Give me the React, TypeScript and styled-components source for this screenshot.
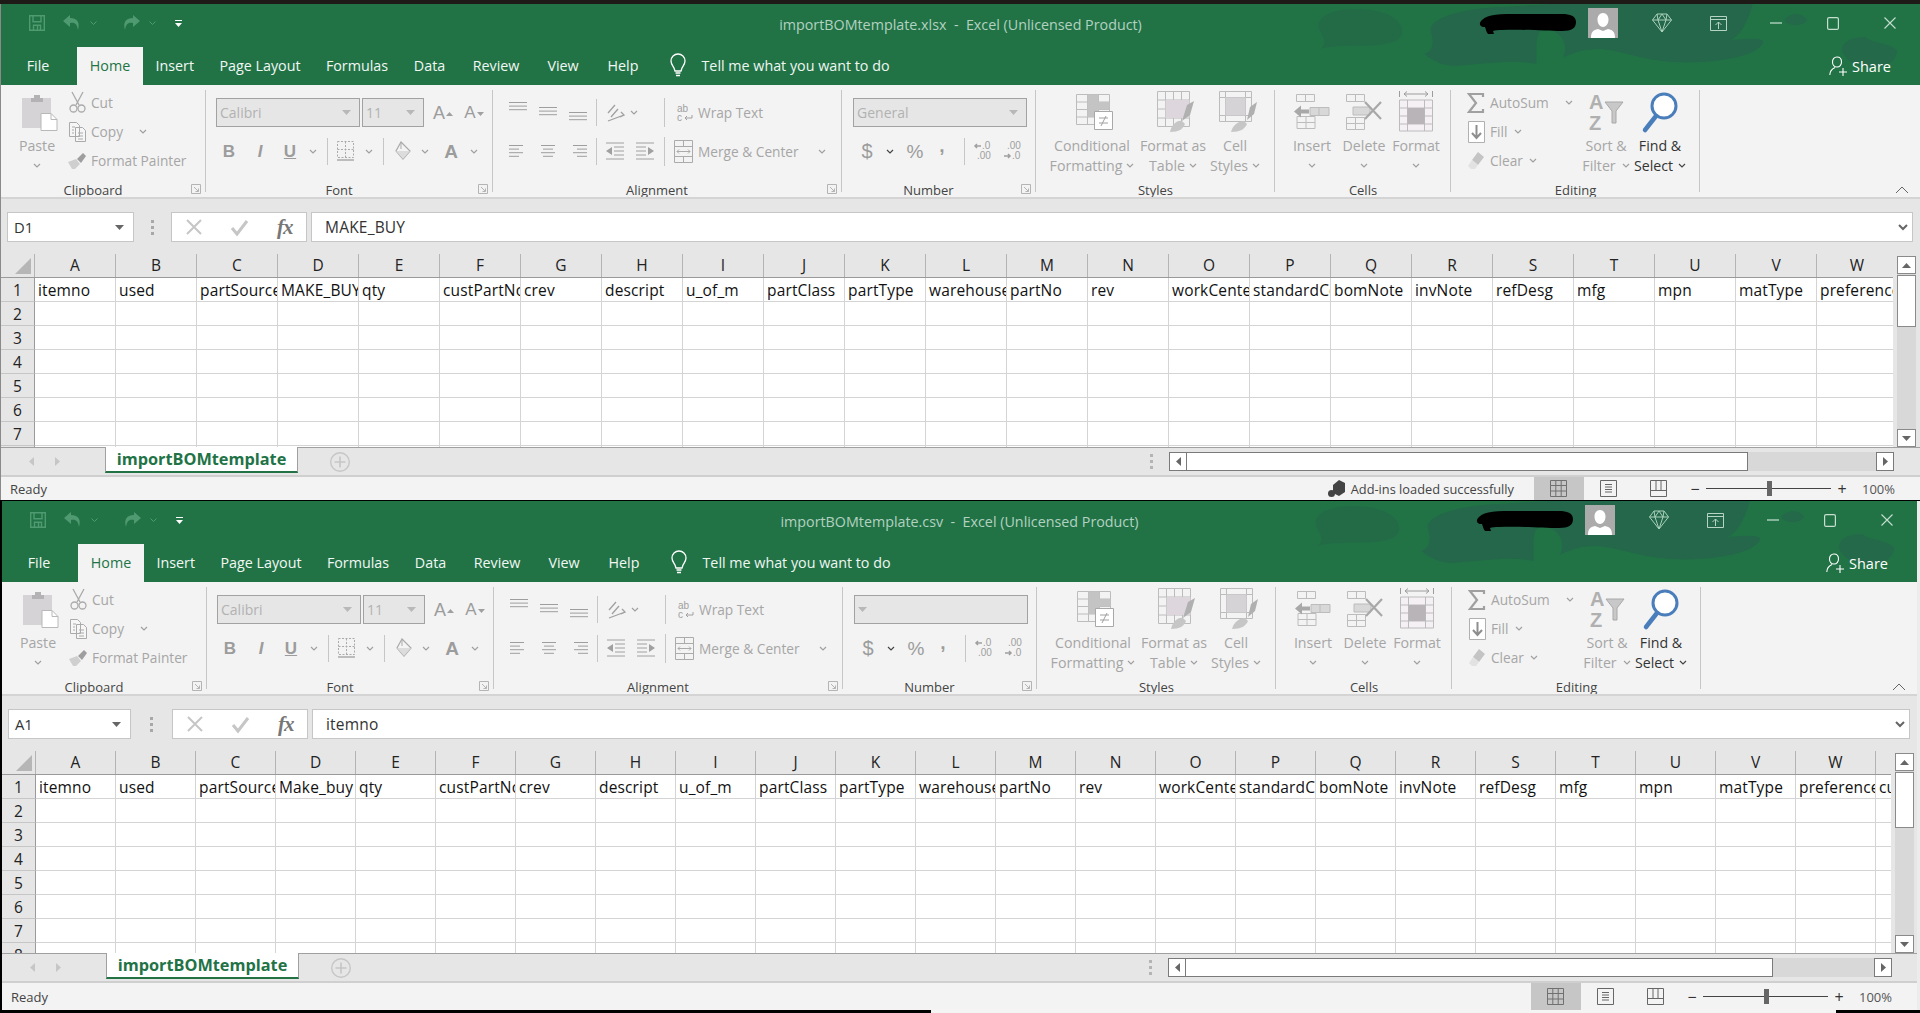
import React from 'react';
import styled, { createGlobalStyle } from 'styled-components';

const UI = '"Open Sans", "Noto Sans", "Liberation Sans", sans-serif';
const GREEN = '#217346';
const DIS = '#a6a6a6';
const STK = '#aaaaaa';
const FIL = '#d6d3d6';

const Global = createGlobalStyle`
  html, body { margin: 0; padding: 0; background: #000; }
  body { width: 1920px; height: 1013px; overflow: hidden; font-family: ${UI}; }
`;

const Page = styled.div`display: flex; flex-direction: column; width: 1920px; height: 1013px; background: #000;`;
const TopStrip = styled.div`height: 4px; background: #1d1a18;`;
const BottomStrip = styled.div`display: flex; height: 3px; background: #000;`;
const BottomPaper = styled.div`width: 905px; margin-left: 931px; background: #f4f4f4;`;

const Win = styled.div<{ $ml: number; $pl: number; $mt: number; $width: number; $edge: number }>`
  display: flex; flex-direction: column; flex: none; box-sizing: border-box;
  width: ${p => p.$width}px; margin-left: ${p => p.$ml}px; margin-top: ${p => p.$mt}px;
  padding-left: ${p => p.$pl}px; background: ${GREEN}; position: relative;
  border-right: ${p => p.$edge}px solid #ececec;
  box-shadow: inset ${p => p.$pl}px 0 0 #8a8a8a;
`;

const Banner = styled.svg`position: absolute; right: 0; top: 0; pointer-events: none;`;

/* ---------- title bar ---------- */
const TitleBar = styled.div`position: relative; display: flex; align-items: center; height: 38px; margin-bottom: 5px; padding: 0 24px 0 28px; color: #b6d4c3;`;
const TitleText = styled.div`position: absolute; left: 0; right: 0; top: 10px; text-align: center; font-size: 14.3px; line-height: 22px; color: #b3d1c0; white-space: pre;`;
const Qat = styled.div`display: flex; align-items: center; position: relative;`;
const WinTools = styled.div`display: flex; align-items: center; margin-left: auto; position: relative;`;
const Ico = styled.svg<{ $ml?: number }>`display: block; flex: none; overflow: visible; margin-left: ${p => p.$ml ?? 0}px;`;
const Avatar = styled.div`width: 30px; height: 30px; margin-left: 10px; background: #ababab; flex: none; overflow: hidden;`;

/* ---------- tabs ---------- */
const TabRow = styled.div`position: relative; display: flex; height: 38px; padding-left: 12px; color: #fff; font-size: 14.3px;`;
const Tab = styled.div<{ $w: number; $active?: boolean; $ml?: number }>`
  display: flex; align-items: center; justify-content: center; flex: none; box-sizing: border-box; padding-bottom: 2px;
  width: ${p => p.$w}px; margin-left: ${p => p.$ml ?? 0}px;
  color: ${p => (p.$active ? GREEN : '#f2f7f4')}; background: ${p => (p.$active ? '#f3f3f3' : 'transparent')};
`;
const TellMe = styled.div`display: flex; align-items: center; margin-left: 16px; gap: 16px; padding-bottom: 2px; color: #f0f6f2; font-size: 14.3px; white-space: nowrap;`;
const Share = styled.div`display: flex; align-items: center; gap: 5px; margin-left: auto; padding-right: 29px; font-size: 14.5px; color: #fff; position: relative;`;

/* ---------- ribbon ---------- */
const Ribbon = styled.div`display: flex; position: relative; box-sizing: border-box; height: 114px; padding-top: 4px; background: #f3f3f3; border-bottom: 2px solid #d4d4d4; font-size: 13.7px; color: ${DIS}; overflow: hidden;`;
const Group = styled.div<{ $w: number }>`
  position: relative; display: flex; flex-direction: column; flex: none; box-sizing: border-box; width: ${p => p.$w}px;
  &::after { content: ''; position: absolute; right: 0; top: 1px; bottom: 5px; width: 1px; background: #c6c6c6; }
`;
const GroupBody = styled.div<{ $pl: number }>`display: flex; flex: 1; min-height: 0; padding-left: ${p => p.$pl}px;`;
const GroupName = styled.div<{ $launcher?: boolean }>`height: 19px; margin-bottom: -3px; line-height: 19px; text-align: center; font-size: 13px; color: #444; padding-right: ${p => (p.$launcher ? 21 : 0)}px;`;
const Launcher = styled.svg`position: absolute; right: 5px; bottom: 3px;`;
const Stack = styled.div<{ $w?: number; $ml?: number }>`display: flex; flex-direction: column; flex: none; ${p => (p.$w ? `width:${p.$w}px;` : '')} margin-left: ${p => p.$ml ?? 0}px; margin-top: -1px;`;
const SmallRow = styled.div`display: flex; align-items: center; height: 29px; white-space: nowrap;`;
const IconSlot = styled.div<{ $w: number; $ml?: number }>`display: flex; align-items: center; justify-content: center; flex: none; width: ${p => p.$w}px; margin-left: ${p => p.$ml ?? 0}px;`;
const SmallText = styled.span<{ $w?: number; $ml?: number }>`flex: none; margin-left: ${p => p.$ml ?? 5}px; ${p => (p.$w ? `width:${p.$w}px;` : '')}`;
const Large = styled.div<{ $w: number; $on?: boolean; $ml?: number }>`display: flex; flex-direction: column; align-items: center; flex: none; width: ${p => p.$w}px; margin-left: ${p => p.$ml ?? 0}px; font-size: 14.2px; color: ${p => (p.$on ? '#333' : DIS)};`;
const LargeIcon = styled.div<{ $dx?: number }>`display: flex; align-items: center; justify-content: center; height: 46px; margin-left: ${p => p.$dx ?? 0}px;`;
const LargeLine = styled.div`display: flex; align-items: center; height: 20px; white-space: nowrap;`;
const ToolRows = styled.div<{ $pt: number }>`display: flex; flex-direction: column; padding-top: ${p => p.$pt}px;`;
const ToolRow = styled.div<{ $h: number; $mb?: number }>`display: flex; align-items: center; height: ${p => p.$h}px; margin-bottom: ${p => p.$mb ?? 0}px; white-space: nowrap;`;
const Combo = styled.div<{ $w: number; $ml?: number }>`display: flex; align-items: center; justify-content: space-between; box-sizing: border-box; flex: none; width: ${p => p.$w}px; height: 29px; margin-left: ${p => p.$ml ?? 0}px; padding: 0 8px 0 3px; background: #e6e6e6; border: 1px solid #a2a2a2; color: #b2b2b2; font-size: 14px;`;
const VSep = styled.div<{ $ml?: number; $mr?: number; $h?: number }>`flex: none; width: 1px; height: ${p => p.$h ?? 27}px; background: #c6c6c6; margin-left: ${p => p.$ml ?? 0}px; margin-right: ${p => p.$mr ?? 0}px;`;
const Glyph = styled.span<{ $b?: boolean; $i?: boolean; $u?: boolean; $size?: number; $color?: string }>`
  font-family: "Liberation Sans", sans-serif; font-size: ${p => p.$size ?? 16}px; line-height: 1; color: ${p => p.$color ?? '#9c9c9c'};
  font-weight: ${p => (p.$b ? 700 : 400)}; font-style: ${p => (p.$i ? 'italic' : 'normal')}; text-decoration: ${p => (p.$u ? 'underline' : 'none')};
`;
const RaisedMark = styled.svg`flex: none; align-self: flex-start; margin-top: 8px; margin-left: 1px;`;
const Shifted = styled.div<{ $y: number }>`transform: translateY(${p => p.$y}px);`;
const Collapse = styled.svg`position: absolute; right: 11px; bottom: 3px;`;

/* ---------- formula bar ---------- */
const FormulaRow = styled.div`display: flex; height: 55px; box-sizing: border-box; padding: 13px 7px 0 6px; background: #e6e6e6;`;
const NameBox = styled.div<{ $w: number }>`display: flex; align-items: center; justify-content: space-between; box-sizing: border-box; flex: none; width: ${p => p.$w}px; height: 30px; padding: 0 9px 0 6px; background: #fff; border: 1px solid #c6c6c6; color: #333; font-size: 14.8px;`;
const DotsSlot = styled.div<{ $w: number }>`display: flex; align-items: center; justify-content: center; flex: none; width: ${p => p.$w}px; height: 30px;`;
const FxBox = styled.div`display: flex; align-items: center; flex: none; box-sizing: border-box; width: 136px; height: 30px; background: #fff; border: 1px solid #c6c6c6; padding-left: 14px;`;
const FxText = styled.span`margin-left: 29px; font-family: "Liberation Serif", serif; font-style: italic; font-weight: 700; font-size: 21px; line-height: 1; letter-spacing: -1px; color: #777;`;
const FormulaBox = styled.div`display: flex; align-items: center; justify-content: space-between; flex: 1; box-sizing: border-box; height: 30px; margin-left: 4px; padding: 0 4px 0 13px; background: #fff; border: 1px solid #c6c6c6; color: #333; font-size: 15.5px; letter-spacing: .2px;`;

/* ---------- grid ---------- */
const SheetArea = styled.div<{ $h: number }>`display: flex; height: ${p => p.$h}px; background: #e6e6e6;`;
const GridMain = styled.div`flex: 1; min-width: 0; overflow: hidden; background: #fff;`;
const HeadRow = styled.div`display: flex; height: 24px; box-sizing: border-box; background: #e6e6e6; border-bottom: 1px solid #9a9a9a;`;
const Corner = styled.div`position: relative; flex: none; width: 34px; box-sizing: border-box; border-right: 1px solid #b4b4b4;`;
const CornerMark = styled.svg`position: absolute; right: 3px; bottom: 3px;`;
const ColHead = styled.div<{ $w: number }>`flex: none; box-sizing: border-box; width: ${p => p.$w}px; border-right: 1px solid #b4b4b4; text-align: center; line-height: 23px; font-size: 15.5px; color: #222;`;
const Row = styled.div`display: flex; height: 24px;`;
const RowHead = styled.div`flex: none; box-sizing: border-box; width: 34px; background: #e6e6e6; border-right: 1px solid #9a9a9a; border-bottom: 1px solid #c6c6c6; text-align: center; line-height: 24px; font-size: 15.5px; color: #222;`;
const Cell = styled.div<{ $w: number }>`flex: none; box-sizing: border-box; width: ${p => p.$w}px; padding-left: 3px; border-right: 1px solid #d4d4d4; border-bottom: 1px solid #d4d4d4; overflow: hidden; white-space: nowrap; line-height: 24px; font-size: 15.5px; letter-spacing: .15px; color: #111;`;
const VScroll = styled.div<{ $mr: number }>`display: flex; flex-direction: column; flex: none; width: 19px; margin: 2px ${p => p.$mr}px 0 4px; background: #d8d8d8;`;
const ScrollBtn = styled.div`display: flex; align-items: center; justify-content: center; flex: none; box-sizing: border-box; width: 19px; height: 18px; background: #fff; border: 1px solid #8a8a8a;`;
const VThumb = styled.div<{ $h: number }>`flex: none; box-sizing: border-box; height: ${p => p.$h}px; margin-top: 1px; background: #fff; border: 1px solid #8a8a8a;`;
const ScrollFill = styled.div`flex: 1;`;

/* ---------- sheet bar ---------- */
const SheetBar = styled.div`display: flex; align-items: stretch; box-sizing: border-box; height: 30px; background: #e6e6e6; border-top: 1px solid #a0a0a0; border-bottom: 2px solid #cfcfcf;`;
const NavArrows = styled.div`display: flex; align-items: center; gap: 21px; flex: none; width: 104px; padding-left: 28px; box-sizing: border-box;`;
const SheetTab = styled.div`display: flex; align-items: center; justify-content: center; flex: none; box-sizing: border-box; width: 193px; height: 26px; margin-top: -1px; background: #fff; border: 1px solid #a0a0a0; border-top: 0; border-bottom: 2px solid ${GREEN}; color: ${GREEN}; font-weight: 700; font-size: 16.3px;`;
const AddSheet = styled.svg`align-self: center; margin-left: 32px; flex: none;`;
const HScrollWrap = styled.div<{ $mr: number; $w: number }>`display: flex; align-items: center; flex: none; margin-left: auto; margin-right: ${p => p.$mr}px; margin-top: -1px; width: ${p => p.$w}px;`;
const Gripper = styled.svg`flex: none; margin-right: 16px;`;
const HTrack = styled.div`display: flex; flex: 1; height: 19px; background: #d8d8d8;`;
const HBtn = styled.div`display: flex; align-items: center; justify-content: center; flex: none; box-sizing: border-box; width: 18px; height: 19px; background: #fff; border: 1px solid #7a7a7a;`;
const HThumb = styled.div<{ $w: number }>`flex: none; box-sizing: border-box; width: ${p => p.$w}px; height: 19px; background: #fff; border: 1px solid #7a7a7a; border-left: 0;`;

/* ---------- status ---------- */
const StatusBar = styled.div<{ $h: number }>`display: flex; align-items: center; box-sizing: border-box; height: ${p => p.$h}px; padding-left: 9px; padding-right: 25px; background: #f3f3f3; color: #444; font-size: 13px;`;
const AddIns = styled.div<{ $show: boolean }>`display: flex; align-items: center; gap: 5px; margin-left: auto; margin-right: 20px; color: #444; font-size: 12.8px; white-space: nowrap; visibility: ${p => (p.$show ? 'visible' : 'hidden')};`;
const ViewBtn = styled.div<{ $active?: boolean }>`display: flex; align-items: center; justify-content: center; flex: none; align-self: stretch; width: 50px; background: ${p => (p.$active ? '#c6c6c6' : 'transparent')};`;
const ZoomSign = styled.span<{ $ml?: number }>`flex: none; width: 12px; margin-left: ${p => p.$ml ?? 0}px; text-align: center; color: #333; font-size: 16px; line-height: 1;`;
const Slider = styled.div`position: relative; flex: none; width: 125px; height: 1px; margin: 0 5px; background: #444;`;
const SliderThumb = styled.div`position: absolute; left: 61px; top: -7px; width: 5px; height: 15px; background: #666;`;
const ZoomPct = styled.span`flex: none; margin-left: 14px; color: #555;`;

/* ---------- drawings ---------- */
const Chev = ({ ml = 0, dark = false }: { ml?: number; dark?: boolean }) => (
  <Ico $ml={ml} width="8" height="5" viewBox="0 0 8 5"><path d="M1 1l3 3 3-3" fill="none" stroke={dark ? '#444' : '#a0a0a0'} strokeWidth="1.2" /></Ico>
);
const Tri = ({ dir = 'down', c = '#7a7a7a' }: { dir?: string; c?: string }) => {
  const d: Record<string, string> = { down: 'M0 0h9L4.5 5z', up: 'M0 5h9L4.5 0z', left: 'M5 0v9L0 4.5z', right: 'M0 0v9l5-4.5z' };
  const v = dir === 'down' || dir === 'up';
  return <Ico width={v ? 9 : 5} height={v ? 5 : 9} viewBox={v ? '0 0 9 5' : '0 0 5 9'}><path d={d[dir]} fill={c} /></Ico>;
};
const Launch = () => (
  <Launcher width="10" height="10" viewBox="0 0 10 10"><path d="M.5 9.500V.5h9v9zM3 3l4.500 4.500M7.500 4.500v3h-3" fill="none" stroke="#b4b4b4" /></Launcher>
);
const QatSave = () => (
  <Ico width="16" height="16" viewBox="0 0 16 16"><path d="M.7.7h14.600v14.600H.7zM4 .7v6h8v-6M4.500 15.300v-5h7v5M8.500 11v4" fill="none" stroke="#4f9a70" strokeWidth="1.400" /></Ico>
);
const QatUndo = ({ flip = false, ml = 0 }: { flip?: boolean; ml?: number }) => (
  <Ico $ml={ml} width="18" height="16" viewBox="0 0 18 16" style={flip ? { transform: 'scaleX(-1)' } : undefined}><path d="M7 0L0 6l7 6V8c5-1 7 1 8 7 2-7 0-12-8-12z" fill="#4f9a70" /></Ico>
);
const QatChev = ({ ml }: { ml: number }) => (
  <Ico $ml={ml} width="7" height="4" viewBox="0 0 7 4"><path d="M.5.500l3 3 3-3" fill="none" stroke="#4f9a70" /></Ico>
);
const QatMore = () => (
  <Ico $ml={19} width="7" height="7" viewBox="0 0 7 7"><path d="M0 0h7v1H0zM0 3h7L3.500 7z" fill="#fff" /></Ico>
);
const Scribble = () => (
  <Ico width="98" height="24" viewBox="0 0 98 24"><path d="M2 9C8 3 20 3 40 3h42c8 0 14 2 14 8s-4 9-14 9c-16 0-40-2-60-1-4 0-7 0-9 1l1 3h-6c-2-2-2-5-3-7-5 0-7-3-3-7z" fill="#000" /></Ico>
);
const Person = () => (
  <svg width="30" height="30" viewBox="0 0 30 30"><path d="M15 5c3.500 0 5.500 3 5.500 6.500S18.500 19 15 19s-5.500-4-5.500-7.500S11.500 5 15 5zM3 30c0-6 2-8 7-9l5 2 5-2c5 1 7 3 7 9z" fill="#fff" /></svg>
);
const Diamond = () => (
  <Ico $ml={34} width="20" height="20" viewBox="0 0 20 20"><path d="M5 1h10l4.500 6L10 19 .5 7zM.5 7h19M6 7l4 12 4-12M5 1l1 6 4-6 4 6 1-6" fill="none" stroke="#a9d0ba" /></Ico>
);
const RibbonOpts = () => (
  <Ico $ml={38} width="17" height="15" viewBox="0 0 17 15"><path d="M.5.500h16v14H.5zM.5 3.500h16M8.500 13V6M5.500 9l3-3 3 3" fill="none" stroke="#b6d4c3" /></Ico>
);
const WinMin = () => <Ico $ml={43} width="12" height="2" viewBox="0 0 12 2"><path d="M0 1h12" stroke="#c6dfd0" strokeWidth="1.200" /></Ico>;
const WinMax = () => <Ico $ml={45} width="12" height="13" viewBox="0 0 12 13"><rect x=".6" y=".6" width="10.800" height="11.800" rx="1.500" fill="none" stroke="#c6dfd0" strokeWidth="1.200" /></Ico>;
const WinClose = () => <Ico $ml={45} width="12" height="12" viewBox="0 0 12 12"><path d="M.5.500l11 11M11.500.500l-11 11" stroke="#c6dfd0" strokeWidth="1.100" /></Ico>;
const Bulb = () => (
  <Ico width="16" height="24" viewBox="0 0 16 24"><path d="M8 1a7 7 0 0 0-7 7c0 3 2 5 3 7l1 3h6l1-3c1-2 3-4 3-7a7 7 0 0 0-7-7zM5.500 20h5M6 22.500h4" fill="none" stroke="#fff" strokeWidth="1.300" /></Ico>
);
const ShareIcon = () => (
  <Ico width="18" height="20" viewBox="0 0 18 20"><path d="M8 1c2.800 0 4.500 2.200 4.500 5s-1.800 5-4.500 5-4.500-2.200-4.500-5S5.200 1 8 1zM.8 19c0-4 2-6 5.200-7.500M10 16h8M14 12v8" fill="none" stroke="#fff" strokeWidth="1.100" /></Ico>
);
const PasteIcon = () => (
  <Ico width="36" height="37" viewBox="0 0 36 37"><path d="M0 4h29v30H0z" fill={FIL} /><path d="M9 4h3V1h6v3h3v4H9z" fill="#b4b2b4" /><path d="M19 19.500h10l6 6v11H19z" fill="#fff" stroke="#b8b8b8" /><path d="M29 19.500v6h6" fill="none" stroke="#b8b8b8" /></Ico>
);
const CutIcon = () => (
  <Ico width="17" height="21" viewBox="0 0 17 21"><path d="M3 0l7 13M14 0L7 13" stroke={STK} strokeWidth="1.300" fill="none" /><circle cx="4.500" cy="16.500" r="3.500" fill="none" stroke={STK} strokeWidth="1.300" /><circle cx="12.500" cy="16.500" r="3.500" fill="none" stroke={STK} strokeWidth="1.300" /></Ico>
);
const CopyIcon = () => (
  <Ico width="17" height="20" viewBox="0 0 17 20"><path d="M.5.500h7l3 3v11H.5zM6.500 5.500h7l3 3v11h-10zM3 5h3M3 8h2M3 11h2M9 11h5M9 14h5M9 17h5" fill="#f6f6f6" stroke={STK} /></Ico>
);
const BrushIcon = () => (
  <Ico width="18" height="16" viewBox="0 0 18 16"><path d="M0 9l8-3 4 5-5 5H4z" fill="#cfcfcf" /><path d="M9 6l6-6 3 3-5 7z" fill="#9e9e9e" /></Ico>
);
const BorderIcon = () => (
  <Ico width="17" height="20" viewBox="0 0 17 20"><path d="M.5.500h16v16H.5zM.5 8.500h16M8.500.500v16" fill="none" stroke={STK} strokeDasharray="2 1.500" /><path d="M0 19h17" stroke={STK} strokeWidth="1.500" /></Ico>
);
const FillIcon = () => (
  <Ico width="17" height="20" viewBox="0 0 17 20"><path d="M6 1l9 9-7 8-7-8z" fill="#f4f4f4" stroke={STK} strokeWidth="1.200" /><path d="M6 1v7" stroke={STK} /><path d="M1 10l7 8 7-8z" fill="#dcdcdc" /></Ico>
);
const Lines = ({ rows, w = 18 }: { rows: [number, number][]; w?: number }) => (
  <Ico width={w} height="14" viewBox={`0 0 ${w} 14`}>
    {rows.map(([x, l], i) => <path key={i} d={`M${x} ${1.500 + i * 3.600}h${l}`} stroke="#9e9e9e" />)}
  </Ico>
);
const OrientIcon = () => (
  <Ico width="19" height="20" viewBox="0 0 19 20"><path d="M2 10l7-8M5 14l7-8M2 18l16-6M15 9l3 3-4 2" fill="none" stroke="#a0a0a0" strokeWidth="1.300" /></Ico>
);
const IndentIcon = ({ inc = false }: { inc?: boolean }) => (
  <Ico width="18" height="18" viewBox="0 0 18 18" style={inc ? { transform: 'scaleX(-1)' } : undefined}><path d="M0 1h18M8 5h10M8 9h10M8 13h10M0 17h18" stroke="#a0a0a0" /><path d="M6 5v8L0 9z" fill="#a0a0a0" /></Ico>
);
const WrapIcon = () => (
  <Ico width="16" height="18" viewBox="0 0 16 18"><text x="0" y="8" fontFamily="Liberation Sans" fontSize="10" fill="#a0a0a0">ab</text><text x="0" y="17" fontFamily="Liberation Sans" fontSize="10" fill="#a0a0a0">c</text><path d="M15 11v3H8M10 12l-2 2 2 2" fill="none" stroke="#a0a0a0" /></Ico>
);
const MergeIcon = () => (
  <Ico width="19" height="23" viewBox="0 0 19 23"><path d="M.5.500h18v22H.5zM.5 6.500h18M.5 16.500h18M9.500.500v6M9.500 16.500v6M3 11.500h13M5 9.500l-2 2 2 2M14 9.500l2 2-2 2" fill="none" stroke="#ababab" /></Ico>
);
const DecIcon = ({ inc = false }: { inc?: boolean }) => (
  <Ico width="16" height="20" viewBox="0 0 16 20">
    <text x={inc ? 3 : 8} y="8" fontFamily="Liberation Sans" fontSize="10" fill="#a0a0a0">{inc ? '.00' : '.0'}</text>
    <text x={inc ? 8 : 3} y="18" fontFamily="Liberation Sans" fontSize="10" fill="#a0a0a0">{inc ? '.0' : '.00'}</text>
    <path d={inc ? 'M0 15h6M4 13l2 2-2 2' : 'M1 5h6M3 3L1 5l2 2'} fill="none" stroke="#a0a0a0" strokeWidth="1.500" />
  </Ico>
);
const CondIcon = () => (
  <Ico width="37" height="36" viewBox="0 0 37 36">
    <path d="M.5.500h33v30H.5zM.5 8h33M.5 15.500h33M.5 23h33M11.500.500v30M22.500.500v30" fill="none" stroke="#bcbcbc" />
    <path d="M11.500.500h11V8h-11zM11.500 8h22v7.500h-22zM11.500 15.500h11V23h-11z" fill="#c4c4c4" />
    <path d="M18.500 17.500h18v18h-18z" fill="#fff" stroke="#a8a8a8" /><path d="M23 24h9M23 29h9M30 22l-5 10" fill="none" stroke="#a0a0a0" />
  </Ico>
);
const TableIcon = () => (
  <Ico width="38" height="42" viewBox="0 0 38 42">
    <path d="M.5.500h32v35H.5zM.5 9h32M.5 18h32M.5 27h32M8.500.500v35M16.500.500v35M24.500.500v35" fill="none" stroke="#bcbcbc" />
    <path d="M8.500 9h24v18h-24z" fill="#ddd6dc" />
    <path d="M30 14l7-4-4 14-8 6z" fill="#b0b0b0" /><path d="M13 41c2-8 7-12 12-11l3 3c-2 5-6 8-15 8z" fill="#c6c6c6" />
  </Ico>
);
const CellStyleIcon = () => (
  <Ico width="38" height="42" viewBox="0 0 38 42">
    <path d="M.5.500h32v30H.5zM6.500.500v30M26.500.500v30M.5 6.500h32M.5 24.500h32" fill="none" stroke="#bcbcbc" />
    <path d="M6.500 6.500h20v18h-20z" fill="#d6d3d6" />
    <path d="M31 16l7-5-3 12-7 6z" fill="#b0b0b0" /><path d="M12 41c2-7 7-11 13-11l3 3c-2 5-7 8-16 8z" fill="#c6c6c6" />
  </Ico>
);
const InsertIcon = () => (
  <Ico width="36" height="36" viewBox="0 0 36 36">
    <path d="M2.500.500h18v7h-18zM11.500.500v7" fill="none" stroke="#bcbcbc" />
    <path d="M3 34.500h18v-12H3zM3 28.500h18M12 22.500v12" fill="none" stroke="#bcbcbc" />
    <path d="M16 13.500h19v8H16zM25 13.500v8" fill="#d8d8d8" stroke="#bcbcbc" />
    <path d="M0 17.500l7-6v4h8v4H7v4z" fill="#a8a8a8" />
  </Ico>
);
const DeleteIcon = () => (
  <Ico width="36" height="36" viewBox="0 0 36 36">
    <path d="M.5.500h18v7H.5zM9.500.500v7M.5 23.500h18v12H.5zM.5 29.500h18M9.500 23.500v12" fill="none" stroke="#bcbcbc" />
    <path d="M7 13h17v8H7z" fill="#d8d8d8" stroke="#bcbcbc" /><path d="M19 8l16 17M35 8L19 25" stroke="#a8a8a8" strokeWidth="2.200" />
  </Ico>
);
const FormatIcon = () => (
  <Ico width="34" height="44" viewBox="0 0 34 44">
    <path d="M.5 1v6M33.500 1v6M5 4h24M5 4l3-2.500M5 4l3 2.500M29 4l-3-2.500M29 4l-3 2.500" fill="none" stroke="#9c9c9c" />
    <path d="M.5 10h33v31H.5zM.5 18h33M.5 26h33M.5 34h33M8.500 10v31M25.500 10v31" fill="#f4f0f4" stroke="#bcbcbc" />
    <path d="M8.500 18h17v16h-17z" fill="#b8b4b8" />
  </Ico>
);
const SumIcon = () => (
  <Ico width="16" height="20" viewBox="0 0 16 20"><path d="M15 4V1H1l7 9-7 9h14v-3" fill="none" stroke="#a0a0a0" strokeWidth="2.200" /></Ico>
);
const FillDown = () => (
  <Ico width="17" height="22" viewBox="0 0 17 22"><path d="M.5.500h16v21H.5z" fill="#fff" stroke="#b0b0b0" /><path d="M8.500 4v12M4 12l4.500 5 4.500-5" fill="none" stroke="#8e8e8e" strokeWidth="2" /></Ico>
);
const EraserIcon = () => (
  <Ico width="16" height="18" viewBox="0 0 16 18"><path d="M10 0l6 5-6 8-6-5z" fill="#c4c4c4" /><path d="M4 8l6 5-3 4H3l-3-3z" fill="#e2e2e2" /></Ico>
);
const SortIcon = () => (
  <Ico width="34" height="38" viewBox="0 0 34 38">
    <text x="0" y="16" fontFamily="Liberation Sans" fontSize="20" fontWeight="700" fill="#b0b0b0">A</text>
    <text x="0" y="37" fontFamily="Liberation Sans" fontSize="20" fontWeight="700" fill="#b0b0b0">Z</text>
    <path d="M16 9h18l-7 9v12h-4V18z" fill="#c8c8c8" stroke="#a8a8a8" />
  </Ico>
);
const FindIcon = () => (
  <Ico width="35" height="40" viewBox="0 0 35 40">
    <circle cx="21" cy="14" r="12" fill="#fff" stroke="#4a7ebb" strokeWidth="3" />
    <path d="M13 24L2 38" stroke="#4a7ebb" strokeWidth="4.500" strokeLinecap="round" />
  </Ico>
);
const AddInIcon = () => (
  <Ico width="18" height="18" viewBox="0 0 18 18"><path d="M5 5l6-5 6 3v9l-6 4-6-3z" fill="#444" /><circle cx="3.500" cy="13.500" r="3.500" fill="#444" /></Ico>
);
const NormalView = () => <Ico width="17" height="17" viewBox="0 0 17 17"><path d="M.5.500h16v16H.5zM.5 5.500h16M.5 11h16M5.800.500v16M11.200.500v16" fill="none" stroke="#707070" /></Ico>;
const PageView = () => <Ico width="17" height="17" viewBox="0 0 17 17"><path d="M.5.500h16v16H.5zM5 4.500h7M5 7h7M5 9.500h7M5 12h7" fill="none" stroke="#666" /></Ico>;
const BreakView = () => <Ico width="17" height="17" viewBox="0 0 17 17"><path d="M.5.500h16v16H.5zM.5 10.500h16M6 .5v10M11 .5v10" fill="none" stroke="#666" /></Ico>;

/* ---------- pieces ---------- */
const Title = ({ text }: { text: string }) => (
  <TitleBar>
    <TitleText>{text}</TitleText>
    <Qat>
      <QatSave /><QatUndo ml={18} /><QatChev ml={9} /><QatUndo flip ml={25} /><QatChev ml={9} /><QatMore />
    </Qat>
    <WinTools>
      <Scribble /><Avatar><Person /></Avatar><Diamond /><RibbonOpts /><WinMin /><WinMax /><WinClose />
    </WinTools>
  </TitleBar>
);

const TABS: [string, number][] = [['Insert', 63.5], ['Page Layout', 107], ['Formulas', 87], ['Data', 58], ['Review', 75], ['View', 59], ['Help', 61]];
const Tabs = () => (
  <TabRow>
    <Tab $w={50}>File</Tab>
    <Tab $w={66} $ml={14} $active>Home</Tab>
    {TABS.map(([t, w]) => <Tab key={t} $w={w}>{t}</Tab>)}
    <TellMe><Bulb />Tell me what you want to do</TellMe>
    <Share><ShareIcon />Share</Share>
  </TabRow>
);

const RibbonView = ({ format }: { format: string }) => (
  <Ribbon>
    <Group $w={205}>
      <GroupBody $pl={11}>
        <Large $w={50}>
          <LargeIcon $dx={6}><PasteIcon /></LargeIcon>
          <LargeLine>Paste</LargeLine>
          <LargeLine><Chev /></LargeLine>
        </Large>
        <Stack $ml={6}>
          <SmallRow><IconSlot $w={18}><CutIcon /></IconSlot><SmallText>Cut</SmallText></SmallRow>
          <SmallRow><IconSlot $w={18}><CopyIcon /></IconSlot><SmallText $w={34}>Copy</SmallText><Chev ml={14} /></SmallRow>
          <SmallRow><IconSlot $w={18}><BrushIcon /></IconSlot><SmallText>Format Painter</SmallText></SmallRow>
        </Stack>
      </GroupBody>
      <GroupName $launcher>Clipboard</GroupName>
      <Launch />
    </Group>

    <Group $w={287}>
      <GroupBody $pl={10}>
        <ToolRows $pt={9}>
          <ToolRow $h={29} $mb={10}>
            <Combo $w={144}>Calibri<Tri c="#b8b8b8" /></Combo>
            <Combo $w={62} $ml={2}>11<Tri c="#b8b8b8" /></Combo>
            <IconSlot $w={34} $ml={2}><Glyph $size={18}>A</Glyph><RaisedMark width="7" height="4" viewBox="0 0 7 4"><path d="M0 4h7L3.500 0z" fill="#a0a0a0" /></RaisedMark></IconSlot>
            <IconSlot $w={28}><Glyph $size={17}>A</Glyph><RaisedMark width="7" height="4" viewBox="0 0 7 4"><path d="M0 0h7L3.500 4z" fill="#a0a0a0" /></RaisedMark></IconSlot>
          </ToolRow>
          <ToolRow $h={28}>
            <IconSlot $w={26}><Glyph $b $size={17}>B</Glyph></IconSlot>
            <IconSlot $w={36}><Glyph $i $b $size={17}>I</Glyph></IconSlot>
            <IconSlot $w={24}><Glyph $u $b $size={17}>U</Glyph></IconSlot>
            <IconSlot $w={22}><Chev /></IconSlot>
            <IconSlot $w={6}><VSep /></IconSlot>
            <IconSlot $w={30}><BorderIcon /></IconSlot>
            <IconSlot $w={18}><Chev /></IconSlot>
            <IconSlot $w={10}><VSep /></IconSlot>
            <IconSlot $w={30}><FillIcon /></IconSlot>
            <IconSlot $w={14}><Chev /></IconSlot>
            <IconSlot $w={38}><Glyph $b $size={19}>A</Glyph></IconSlot>
            <IconSlot $w={8}><Chev /></IconSlot>
          </ToolRow>
        </ToolRows>
      </GroupBody>
      <GroupName $launcher>Font</GroupName>
      <Launch />
    </Group>

    <Group $w={349}>
      <GroupBody $pl={10}>
        <ToolRows $pt={9}>
          <ToolRow $h={29} $mb={10}>
            <IconSlot $w={30}><Shifted $y={-5}><Lines rows={[[0, 18], [0, 18], [0, 18]]} /></Shifted></IconSlot>
            <IconSlot $w={30}><Lines rows={[[0, 18], [0, 18], [0, 18]]} /></IconSlot>
            <IconSlot $w={30}><Shifted $y={5}><Lines rows={[[0, 18], [0, 18], [0, 18]]} /></Shifted></IconSlot>
            <IconSlot $w={6}><VSep /></IconSlot>
            <IconSlot $w={33}><OrientIcon /></IconSlot>
            <IconSlot $w={4}><Chev /></IconSlot>
            <VSep $ml={28} $h={29} />
            <IconSlot $w={16} $ml={12}><WrapIcon /></IconSlot>
            <SmallText $ml={5}>Wrap Text</SmallText>
          </ToolRow>
          <ToolRow $h={28}>
            <IconSlot $w={30}><Lines rows={[[0, 14], [0, 10], [0, 14], [0, 10]]} /></IconSlot>
            <IconSlot $w={30}><Lines rows={[[2, 14], [4, 10], [2, 14], [4, 10]]} /></IconSlot>
            <IconSlot $w={30}><Lines rows={[[4, 14], [8, 10], [4, 14], [8, 10]]} /></IconSlot>
            <IconSlot $w={6}><VSep /></IconSlot>
            <IconSlot $w={32}><IndentIcon /></IconSlot>
            <IconSlot $w={28}><IndentIcon inc /></IconSlot>
            <VSep $ml={5} $h={29} />
            <IconSlot $w={19} $ml={9}><MergeIcon /></IconSlot>
            <SmallText $ml={5} $w={106}>Merge &amp; Center</SmallText>
            <Chev ml={14} />
          </ToolRow>
        </ToolRows>
      </GroupBody>
      <GroupName $launcher>Alignment</GroupName>
      <Launch />
    </Group>

    <Group $w={194}>
      <GroupBody $pl={11}>
        <ToolRows $pt={9}>
          <ToolRow $h={29} $mb={10}><Combo $w={174}>{format}<Tri c="#b8b8b8" /></Combo></ToolRow>
          <ToolRow $h={28}>
            <IconSlot $w={28}><Glyph $size={20}>$</Glyph></IconSlot>
            <IconSlot $w={18}><Chev dark /></IconSlot>
            <IconSlot $w={32}><Glyph $size={19}>%</Glyph></IconSlot>
            <IconSlot $w={22}><Shifted $y={-5}><Glyph $b $size={19}>,</Glyph></Shifted></IconSlot>
            <VSep $ml={11} />
            <IconSlot $w={34}><DecIcon /></IconSlot>
            <IconSlot $w={26}><DecIcon inc /></IconSlot>
          </ToolRow>
        </ToolRows>
      </GroupBody>
      <GroupName $launcher>Number</GroupName>
      <Launch />
    </Group>

    <Group $w={239}>
      <GroupBody $pl={13}>
        <Large $w={86}>
          <LargeIcon $dx={4}><CondIcon /></LargeIcon>
          <LargeLine>Conditional</LargeLine>
          <LargeLine>Formatting<Chev ml={4} /></LargeLine>
        </Large>
        <Large $w={76}>
          <LargeIcon $dx={6}><TableIcon /></LargeIcon>
          <LargeLine>Format as</LargeLine>
          <LargeLine>Table<Chev ml={4} /></LargeLine>
        </Large>
        <Large $w={48}>
          <LargeIcon $dx={6}><CellStyleIcon /></LargeIcon>
          <LargeLine>Cell</LargeLine>
          <LargeLine>Styles<Chev ml={4} /></LargeLine>
        </Large>
      </GroupBody>
      <GroupName>Styles</GroupName>
    </Group>

    <Group $w={176}>
      <GroupBody $pl={12}>
        <Large $w={50}><LargeIcon><InsertIcon /></LargeIcon><LargeLine>Insert</LargeLine><LargeLine><Chev /></LargeLine></Large>
        <Large $w={54}><LargeIcon><DeleteIcon /></LargeIcon><LargeLine>Delete</LargeLine><LargeLine><Chev /></LargeLine></Large>
        <Large $w={50}><LargeIcon><FormatIcon /></LargeIcon><LargeLine>Format</LargeLine><LargeLine><Chev /></LargeLine></Large>
      </GroupBody>
      <GroupName>Cells</GroupName>
    </Group>

    <Group $w={249}>
      <GroupBody $pl={16}>
        <Stack $w={113}>
          <SmallRow><IconSlot $w={18}><SumIcon /></IconSlot><SmallText $w={60}>AutoSum</SmallText><Chev ml={15} /></SmallRow>
          <SmallRow><IconSlot $w={18}><FillDown /></IconSlot><SmallText $w={18}>Fill</SmallText><Chev ml={6} /></SmallRow>
          <SmallRow><IconSlot $w={18}><EraserIcon /></IconSlot><SmallText $w={35}>Clear</SmallText><Chev ml={4} /></SmallRow>
        </Stack>
        <Large $w={52}><LargeIcon><SortIcon /></LargeIcon><LargeLine>Sort &amp;</LargeLine><LargeLine>Filter<Chev ml={6} /></LargeLine></Large>
        <Large $w={56} $on>
          <LargeIcon><FindIcon /></LargeIcon>
          <LargeLine>Find &amp;</LargeLine>
          <LargeLine>Select<Chev ml={5} dark /></LargeLine>
        </Large>
      </GroupBody>
      <GroupName>Editing</GroupName>
    </Group>

    <Collapse width="14" height="8" viewBox="0 0 14 8"><path d="M1 7l6-6 6 6" fill="none" stroke="#666" /></Collapse>
  </Ribbon>
);

const Formula = ({ cell, text, nameW, dotsW }: { cell: string; text: string; nameW: number; dotsW: number }) => (
  <FormulaRow>
    <NameBox $w={nameW}>{cell}<Tri c="#666" /></NameBox>
    <DotsSlot $w={dotsW}><Ico width="3" height="15" viewBox="0 0 3 15"><path d="M0 0h3v3H0zM0 6h3v3H0zM0 12h3v3H0z" fill="#a8a8a8" /></Ico></DotsSlot>
    <FxBox>
      <Ico width="16" height="16" viewBox="0 0 16 16"><path d="M1 1l14 14M15 1L1 15" stroke="#c6c6c6" strokeWidth="2" /></Ico>
      <Ico $ml={29} width="17" height="15" viewBox="0 0 17 15"><path d="M1 8l5 6L16 1" fill="none" stroke="#c6c6c6" strokeWidth="3" /></Ico>
      <FxText>fx</FxText>
    </FxBox>
    <FormulaBox>{text}<Ico width="10" height="7" viewBox="0 0 10 7"><path d="M1 1l4 4 4-4" fill="none" stroke="#666" strokeWidth="2" /></Ico></FormulaBox>
  </FormulaRow>
);

const LETTERS = 'ABCDEFGHIJKLMNOPQRSTUVWX'.split('');

const Sheet = ({ h, colW, heads, thumb, scrollMr }: { h: number; colW: number; heads: string[]; thumb: number; scrollMr: number }) => (
  <SheetArea $h={h}>
    <GridMain>
      <HeadRow>
        <Corner><CornerMark width="16" height="16" viewBox="0 0 16 16"><path d="M16 0v16H0z" fill="#b6b6b6" /></CornerMark></Corner>
        {LETTERS.map(l => <ColHead key={l} $w={colW}>{l}</ColHead>)}
      </HeadRow>
      {[1, 2, 3, 4, 5, 6, 7, 8].map(r => (
        <Row key={r}>
          <RowHead>{r}</RowHead>
          {LETTERS.map((l, i) => <Cell key={l} $w={colW}>{r === 1 ? heads[i] : ''}</Cell>)}
        </Row>
      ))}
    </GridMain>
    <VScroll $mr={scrollMr}>
      <ScrollBtn><Tri dir="up" c="#666" /></ScrollBtn>
      <VThumb $h={thumb} />
      <ScrollFill />
      <ScrollBtn><Tri c="#666" /></ScrollBtn>
    </VScroll>
  </SheetArea>
);

const SheetTabs = ({ hThumb, hW, hMr }: { hThumb: number; hW: number; hMr: number }) => (
  <SheetBar>
    <NavArrows><Tri dir="left" c="#c6c6c6" /><Tri dir="right" c="#c6c6c6" /></NavArrows>
    <SheetTab>importBOMtemplate</SheetTab>
    <AddSheet width="20" height="20" viewBox="0 0 20 20"><circle cx="10" cy="10" r="9.300" fill="none" stroke="#c6c6c6" strokeWidth="1.400" /><path d="M10 4.500v11M4.500 10h11" stroke="#c6c6c6" strokeWidth="1.600" /></AddSheet>
    <HScrollWrap $w={hW} $mr={hMr}>
      <Gripper width="3" height="15" viewBox="0 0 3 15"><path d="M0 0h3v3H0zM0 6h3v3H0zM0 12h3v3H0z" fill="#b4b4b4" /></Gripper>
      <HBtn><Tri dir="left" c="#666" /></HBtn>
      <HTrack><HThumb $w={hThumb} /></HTrack>
      <HBtn><Tri dir="right" c="#666" /></HBtn>
    </HScrollWrap>
  </SheetBar>
);

const Status = ({ h, addins }: { h: number; addins: boolean }) => (
  <StatusBar $h={h}>
    Ready
    <AddIns $show={addins}><AddInIcon />Add-ins loaded successfully</AddIns>
    <ViewBtn $active><NormalView /></ViewBtn>
    <ViewBtn><PageView /></ViewBtn>
    <ViewBtn><BreakView /></ViewBtn>
    <ZoomSign $ml={5}>−</ZoomSign>
    <Slider><SliderThumb /></Slider>
    <ZoomSign>+</ZoomSign>
    <ZoomPct>100%</ZoomPct>
  </StatusBar>
);

const BannerArt = () => (
  <Banner width="620" height="81" viewBox="0 0 1568 243" preserveAspectRatio="none">
    <path d="M50 135C70 120 60 100 50 80C35 40 80 15 140 15C220 15 265 50 258 90C250 125 190 125 130 125C100 125 70 128 50 135Z" fill="#236b47" />
    <path d="M315 150C345 135 335 100 330 75C340 35 420 15 500 10C560 5 620 0 660 0H1145C1135 40 1120 90 1090 108C1130 105 1160 100 1172 112C1165 150 1080 178 960 175C870 172 820 140 760 135C720 135 690 145 665 162C680 125 665 80 620 75C590 80 600 140 598 180C540 165 470 180 400 185C360 187 335 170 315 150Z" fill="#24674a" />
    <path d="M1225 50C1235 25 1270 25 1282 48C1275 65 1240 70 1225 50Z" fill="#24694a" />
    <path d="M1370 135C1375 110 1400 98 1430 100C1450 120 1490 115 1510 140C1510 165 1490 190 1450 190C1410 190 1375 170 1370 135Z" fill="#24694a" />
  </Banner>
);

interface WinProps {
  title: string; cell: string; formula: string; format: string; colW: number; heads: string[];
  ml: number; pl: number; mt: number; width: number; edge: number; nameW: number; dotsW: number;
  gridH: number; thumb: number; scrollMr: number; hThumb: number; hW: number; hMr: number; statusH: number; addins: boolean;
}

const ExcelWindow = (p: WinProps) => (
  <Win $ml={p.ml} $pl={p.pl} $mt={p.mt} $width={p.width} $edge={p.edge}>
    <BannerArt />
    <Title text={p.title} />
    <Tabs />
    <RibbonView format={p.format} />
    <Formula cell={p.cell} text={p.formula} nameW={p.nameW} dotsW={p.dotsW} />
    <Sheet h={p.gridH} colW={p.colW} heads={p.heads} thumb={p.thumb} scrollMr={p.scrollMr} />
    <SheetTabs hThumb={p.hThumb} hW={p.hW} hMr={p.hMr} />
    <Status h={p.statusH} addins={p.addins} />
  </Win>
);

const HEADS = (d: string) => ['itemno', 'used', 'partSource', d, 'qty', 'custPartNo', 'crev', 'descript', 'u_of_m', 'partClass', 'partType', 'warehouse', 'partNo', 'rev', 'workCenter', 'standardCost', 'bomNote', 'invNote', 'refDesg', 'mfg', 'mpn', 'matType', 'preference', 'cu'];

export default function App() {
  return (
    <Page>
      <Global />
      <TopStrip />
      <ExcelWindow title="importBOMtemplate.xlsx  -  Excel (Unlicensed Product)" cell="D1" formula="MAKE_BUY" format="General" colW={81} heads={HEADS('MAKE_BUY')}
        ml={0} pl={1} mt={0} width={1920} edge={0} nameW={127} dotsW={37} gridH={193} thumb={52} scrollMr={4} hThumb={561} hW={744} hMr={26} statusH={23} addins />
      <ExcelWindow title="importBOMtemplate.csv  -  Excel (Unlicensed Product)" cell="A1" formula="itemno" format="" colW={80} heads={HEADS('Make_buy')}
        ml={2} pl={0} mt={1} width={1918} edge={3} nameW={123} dotsW={41} gridH={202} thumb={56} scrollMr={3} hThumb={587} hW={743} hMr={25} statusH={27} addins={false} />
      <BottomStrip><BottomPaper /></BottomStrip>
    </Page>
  );
}
